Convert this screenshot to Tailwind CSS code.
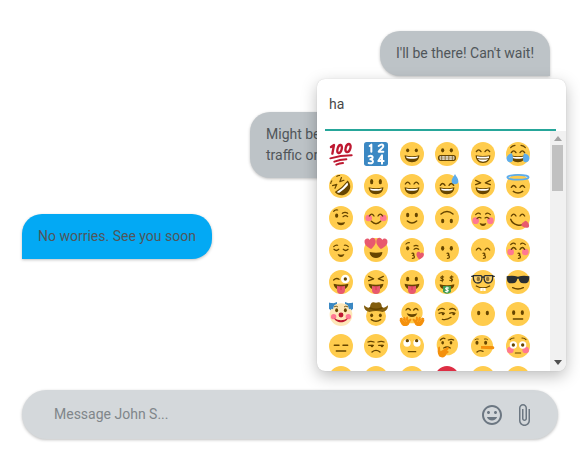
<!DOCTYPE html>
<html lang="en">
<head>
<meta charset="utf-8">
<meta name="viewport" content="width=device-width, initial-scale=1">
<title>Chat</title>
<script src="https://cdn.jsdelivr.net/npm/@tailwindcss/browser@4"></script>
</head>
<body class="flex min-h-screen flex-col overflow-hidden bg-white px-[22px] pt-[31px] pb-[21px] font-[Roboto,sans-serif] text-sm leading-[21px] text-[#50565a]">
<main class="flex flex-1 flex-col gap-9 pr-2">
  <p class="self-end rounded-[20px] rounded-br-none bg-[#bdc3c7] px-4 py-3 shadow-[0_1px_3px_rgba(0,0,0,0.25)]">I'll be there! Can't wait!</p>
  <p class="w-[300px] self-end rounded-[20px] rounded-br-none bg-[#bdc3c7] px-4 py-3 shadow-[0_1px_3px_rgba(0,0,0,0.25)]">Might be a few minutes late, there is<br>traffic on the way</p>
  <p class="self-start rounded-[20px] rounded-bl-none bg-[#03a9f4] px-4 py-3 shadow-[0_1px_3px_rgba(0,0,0,0.25)]">No worries. See you soon</p>
</main>

<footer class="relative">
  <section aria-label="Emoji picker" class="absolute -right-2 bottom-full mb-[19px] flex h-[292px] w-[249px] flex-col overflow-hidden rounded-lg bg-white shadow-[0_5px_16px_rgba(0,0,0,0.26),0_0_1px_rgba(0,0,0,0.2)]">
    <input type="text" aria-label="Search emoji" value="ha" class="mr-2.5 ml-2 h-[52px] shrink-0 border-b-2 border-[#26a69a] bg-transparent pl-1 text-[#484848] outline-none">
    <div class="flex min-h-0 flex-1">
      <div id="emoji" class="grid flex-1 auto-rows-[32px] grid-cols-6 content-start overflow-hidden pt-[7px] pr-3.5 pl-1.5"></div>
      <div aria-hidden="true" class="flex w-4 flex-col items-center justify-between bg-[#f1f1f1] pr-px">
        <div class="flex flex-col items-center gap-1 pt-[5px]">
          <svg class="h-[5px] w-2" viewBox="0 0 8 5"><path d="M4 0l4 5H0z" fill="#a3a3a3"/></svg>
          <div class="h-[46px] w-[11px] bg-[#c1c1c1]"></div>
        </div>
        <svg class="mb-1.5 h-[5px] w-2" viewBox="0 0 8 5"><path d="M4 5l4-5H0z" fill="#505050"/></svg>
      </div>
    </div>
  </section>

  <form class="flex h-[49px] items-center gap-2 rounded-full bg-[#d4d8db] pr-[22px] pl-8 shadow-[0_1px_3px_rgba(0,0,0,0.25)]">
    <input type="text" aria-label="Message" placeholder="Message John S..." class="min-w-0 flex-1 bg-transparent outline-none placeholder:text-[#80868a]">
    <button type="button" aria-label="Emoji" class="text-[#6c7782]"><svg class="size-6" viewBox="0 0 24 24" fill="currentColor"><path d="M11.99 2C6.47 2 2 6.48 2 12s4.47 10 9.99 10C17.52 22 22 17.52 22 12S17.52 2 11.99 2zM12 20c-4.42 0-8-3.58-8-8s3.58-8 8-8 8 3.58 8 8-3.58 8-8 8zm3.5-9c.83 0 1.5-.67 1.5-1.5S16.33 8 15.5 8 14 8.67 14 9.5s.67 1.5 1.5 1.5zm-7 0c.83 0 1.5-.67 1.5-1.5S9.33 8 8.5 8 7 8.67 7 9.5 7.67 11 8.5 11zm3.5 6.5c2.33 0 4.31-1.46 5.11-3.5H6.89c.8 2.04 2.78 3.5 5.11 3.5z"/></svg></button>
    <button type="button" aria-label="Attach file" class="text-[#6c7782]"><svg class="size-6" viewBox="0 0 24 24" fill="currentColor"><path d="M16.5 6v11.5c0 2.21-1.79 4-4 4s-4-1.79-4-4V5c0-1.38 1.12-2.5 2.5-2.5s2.5 1.12 2.5 2.5v10.5c0 .55-.45 1-1 1s-1-.45-1-1V6H10v9.5c0 1.38 1.12 2.5 2.5 2.5s2.5-1.12 2.5-2.5V5c0-2.21-1.79-4-4-4S7 2.79 7 5v12.5c0 3.04 2.46 5.5 5.5 5.5s5.5-2.46 5.5-5.5V6h-1.5z"/></svg></button>
  </form>
</footer>

<script>
// Emoji artwork on a 36-unit canvas, assembled from shared facial features.
const B = '#664500';
const fill = (d, c = B) => `<path fill="${c}" d="${d}"/>`;
const line = (d, w = 2, c = B) => `<path fill="none" stroke="${c}" stroke-width="${w}" stroke-linecap="round" stroke-linejoin="round" d="${d}"/>`;
const oval = (x, y, rx, ry, c = B) => `<ellipse cx="${x}" cy="${y}" rx="${rx}" ry="${ry}" fill="${c}"/>`;
const face = oval(18, 18, 18, 18, '#ffcc4d');
const eyes = (y, ry = 3.2, rx = 2.4) => oval(11.5, y, rx, ry) + oval(24.5, y, rx, ry);
const happy = y => line(`M8 ${y}q3.5-5.5 7 0M21 ${y}q3.5-5.5 7 0`);
const shut = y => line(`M7.5 ${y}q3.5 3.5 7 0M21.5 ${y}q3.5 3.5 7 0`);
const squint = line('M7 9.5l7.5 3.7-7.5 2.8M29 9.5l-7.5 3.7 7.5 2.8');
const grin = fill('M7 20q11 3 22 0c0 6-4 10.5-11 10.5S7 26 7 20z') + fill('M9 21.7q9 1.8 18 0-.2 3-3.5 3.2-5.5.7-11 0Q9.2 24.700 9 21.7z', '#fff');
const beam = fill('M7 20q11 2 22 0c0 7-4 11.5-11 11.5S7 27 7 20z') + fill('M9 21.5q9 1.5 18 0V24q-9 1.5-18 0zM10 25.5q8 1.5 16 0-2.5 4-8 4t-8-4z', '#fff');
const brows = line('M7 8.5q2-3 6.5-3.5M29 8.5q-2-3-6.5-3.5', 1.8);
const cheeks = y => oval(7, y, 5, 5, '#ff7892') + oval(29, y, 5, 5, '#ff7892');
const smile = (y, h = 5) => line(`M11 ${y}q7 ${h} 14 0`, 2.2);
const kiss = line('M18 23c3-.8 4 2.500 1 3.200 3.800.3 3.800 4.500-.5 4.300', 1.8);
const tongue = fill('M7 20.5q11 3 22 0c0 5-4 9-11 9s-11-4-11-9z') + fill('M12 23.5q6 2 12 0V30a6 6 0 0 1-12 0z', '#e8596e') + line('M18 24.5v5', 1.2, '#dd2e44');
const heart = (x, y, s) => `<path transform="translate(${x} ${y}) scale(${s})" fill="#e8596e" d="M0 3C-1-1-8-1-8 5c0 5 4 8 8 11 4-3 8-6 8-11 0-6-7-6-8-2z"/>`;
const hand = fill('M1 24q1-1.500 2.500 0l2 2-.500-3q1-2 2.500 0l1.500 3 .5-3.500q2-1.500 2.500.5l.500 4 3-2q2 0 1.500 2l-2.500 4c-1 4-4 5-7 5-5 0-6-4-8-8q-.500-2 1-2l-1-2z', '#f4900c') + line('M3.500 26l4 3.500M8.500 26.500l1.500 3', 1, '#ffac33');

const emoji = [
  ['hundred points', line('M3 7.5L7.5 4.500 5 17.500M17.500 4.5c-4-.5-7 10.500-3.500 12C18.5 17.500 21.5 5.5 17.5 4.5zM30 3c-5 0-7 11-3.5 12C31.5 16 35 3.5 30 3z', 3.5, '#be1931') + line('M2 24.5Q17 20 34 20M8 29.5q8-3 18-3.5M11 34q5-2 10-2.5', 3, '#be1931')],
  ['numbers', '<rect width="36" height="36" rx="4" fill="#3b88c3"/>' + line('M8.5 6l2.500-2v10.5M22 6q6-4.5 7 0c0 3-5 5-7 8.500h7M7 21.5c7-3 8 4 2.5 4.5C16 26.5 14 34 7 31.5M27 32.5V20l-5.5 8.5h8', 3, '#fff')],
  ['grinning', face + eyes(12.5, 2.8, 2.3) + grin],
  ['grimacing', face + eyes(12.5) + `<rect x="5.500" y="20.500" width="25" height="7" rx="3" fill="#fff" stroke="${B}" stroke-width="2"/>` + line('M5 24h26M10 20v8M15.3 20v8M20.7 20v8M26 20v8', 1)],
  ['beaming', face + happy(14.5) + beam],
  ['tears of joy', face + brows + happy(16) + grin + fill('M9 17C3 18 0 22 1 26c1 5 7 6 9 2 1-3 0-7-1-11zM27 17c6 1 9 5 8 9-1 5-7 6-9 2-1-3 0-7 1-11z', '#5dadec')],
  ['rolling on the floor', `<g transform="rotate(-42 18 18)">${face}${line('M9 9l6 3-6 2.500M27 9l-6 3 6 2.500', 1.800)}${line('M9 5q2-2 4-2M27 5q-2-2-4-2', 1.600)}${fill('M5 18.500q13 2.500 26 0c0 8-5 13.500-13 13.500S5 26.500 5 18.500z')}${fill('M7.500 20.500q10.500 2 21 0 0 3-2.500 3.500-8 1-16 0-2.500-.5-2.500-3.500z', '#fff')}</g>`],
  ['smiley', face + eyes(11.5, 4) + grin],
  ['smile', face + happy(15) + grin],
  ['sweat smile', face + happy(17) + grin + fill('M30 0c-2 4-5 7-5 10.5a5 5 0 0 0 10 0C35 7 32 4 30 0z', '#5dadec')],
  ['laughing', face + squint + grin],
  ['innocent', face + '<ellipse cx="18" cy="5" rx="16" ry="3.6" fill="none" stroke="#5dadec" stroke-width="2.6"/>' + happy(20) + smile(26, 5)],
  ['wink', face + oval(11.5, 14.5, 2.4, 3.2) + line('M7 8q2-3 6-2M20 11q4-3 8 0M21 16q4-3 7 0', 1.800) + fill('M12 24q6 2.500 12 0-1 5-6 5t-6-5z')],
  ['blush', face + cheeks(18) + happy(15) + smile(23, 7)],
  ['slight smile', face + eyes(13.5, 3.5) + smile(22.5, 6)],
  ['upside down', face + eyes(22.5, 3.5) + line('M9 12q9-7.500 18 0', 2.2)],
  ['relaxed', face + cheeks(22) + line('M7 13q4-4 7-1M29 13q-4-4-7-1', 1.8) + line('M9 19q3-3 6-1M27 19q-3-3-6-1', 1.8) + fill('M13 25.500q5 2 10 0-1 4.500-5 4.500t-5-4.500z')],
  ['yum', face + happy(15) + line('M7 20c3 9 16 12 23 5', 2.2) + fill('M24 26l5-4c4 1 7 6 5 10-4 2-9 0-11-3z', '#e8596e')],
  ['relieved', face + line('M7 13q3-3 6-2M29 13q-3-3-6-2', 1.7) + shut(17) + fill('M13 24q5 2 10 0-1 4.500-5 4.500t-5-4.500z')],
  ['heart eyes', face + `<g transform="rotate(-8 9 8)">${heart(9.5, 0, 1.05)}</g><g transform="rotate(8 27 8)">${heart(26.5, 0, 1.05)}</g>` + fill('M8.5 21q9.500 2 19 0c0 5.500-4.500 9-9.500 9s-9.500-3.500-9.500-9z')],
  ['kissing heart', face + oval(11.5, 15.5, 2.4, 3.2) + line('M9 9q2-2.500 5-2M21 12q3-2 6 0M21 17q3-3 7 0', 1.800) + kiss + `<g transform="rotate(12 30 26)">${heart(30, 21, .7)}</g>`],
  ['kissing', face + eyes(15.5, 3.5) + kiss],
  ['kissing smiling', face + happy(18) + kiss],
  ['kissing closed eyes', face + cheeks(21) + line('M7 10q4-4 7-1M29 10q-4-4-7-1', 1.8) + happy(17) + kiss],
  ['wink tongue', face + oval(24.5, 13.5, 6.5, 6.5, '#fff') + oval(24.5, 13.5, 2.5, 2.5) + line('M7 15q4-4 8-1') + tongue],
  ['squint tongue', face + squint + tongue],
  ['tongue', face + eyes(13.5, 3.5) + tongue],
  ['money', face + line('M13 10.500c-4-2-6 1.500-2.500 2.500s2 4-2.500 2.500M11 8.500v9M27 10.500c-4-2-6 1.500-2.500 2.500s2 4-2.500 2.500M25 8.500v9', 1.6) + fill('M7 21.500q11 3 22 0c0 5-4 8-11 8s-11-3-11-8z') + fill('M12 24h12v9q-6 5-12 0z', '#3e9b52') + line('M20.5 27c-5-1.5-6 1.500-2.5 2.500s2 3.500-2.5 2.500M18 25.5v8', 1.6, '#fff')],
  ['nerd', face + oval(11, 13.5, 2.600, 3.300) + oval(25, 13.5, 2.600, 3.300) + '<path fill="#ffe8b6" fill-opacity=".3" stroke="#292f33" stroke-width="1.9" d="M3.500 8.500h11q2 0 2 2.500c0 6-2 8.500-6 8.500s-7.500-2-7-11zM32.500 8.500h-11q-2 0-2 2.500c0 6 2 8.500 6 8.500s7.500-2 7-11z"/>' + line('M1 9.500h2M33 9.500h2M16.500 11q1.500-1 3 0', 1.900, '#292f33') + line('M8 24q10 6 20 0') + fill('M14 27h8v4.500h-3.5v-3.500h-1v3.500H14z', '#fff')],
  ['sunglasses', face + fill('M1 9.500q9-2 17 .5 8-2.500 17-.5v2.500c-1 7.500-3 8-9 8-4 0-6-2.500-7-7h-2c-1 4.500-3 7-7 7-6 0-8-.5-9-8z', '#292f33') + line('M10 26.500q8 4 16 0', 2.2)],
  ['clown', fill('M0 1l7 1 5-2v9L4 14l-4-4zM36 1l-7 1-5-2v9l8 5 4-4z', '#3b88c3') + oval(18, 19, 17, 17, '#fee7b8') + fill('M0 1l8 2-2 8-6-2zM36 1l-8 2 2 8 6-2z', '#3b88c3') + oval(7, 22, 4, 4, '#ff7892') + oval(29, 22, 4, 4, '#ff7892') + eyes(12.5, 3, 2.200) + line('M8 7q3-2 5 0M28 7q-3-2-5 0', 1.3) + fill('M8 24.500q10 6 20 0c-.5 3.500-5 6-10 6s-9.500-2.500-10-6z', '#be1931') + oval(18, 19.500, 3.700, 3.700, '#be1931')],
  ['cowboy', oval(18, 21, 15, 15, '#ffcc4d') + eyes(20, 2.8, 2.200) + smile(26.5, 5) + fill('M0 5c4 4 7 4 9 3 1-9 5-8 9-7 4-1 8-2 9 7 2 1 5 1 9-3 0 6-3 9-8 10q-10-3-20 0C3 14 0 11 0 5z', '#825d0e') + line('M9 9q9 4 18 0', 2.5, B)],
  ['hugging', oval(18, 16, 16, 16, '#ffcc4d') + line('M9 12q3-4.500 6.500 0M20.500 12q3.500-4.500 6.500 0') + fill('M10 17q8 3 16 0-2 5.500-8 5.500T10 17z') + hand + `<g transform="matrix(-1 0 0 1 36 0)">${hand}</g>`],
  ['smirk', face + line('M5 12q5-4 9-1M22 11q5-3 9 1M6 17q4-2 8 0M22 17q4-2 8 0M11 26q7 1.5 13-3', 1.900) + oval(12, 18, 2, 2) + oval(28, 18, 2, 2)],
  ['no mouth', face + eyes(16.5, 3.5)],
  ['neutral', face + eyes(16, 3.5) + line('M11 25.5h14')],
  ['expressionless', face + line('M8 17h7M21 17h7M11 25.5h14', 2.2)],
  ['unamused', face + line('M6 12q4-2 9 0M21 12q5-2 9 0M7 17h7M22 17h7M12 27q6-5 12 0') + oval(12, 18, 2, 1.8) + oval(27, 18, 2, 1.8)],
  ['rolling eyes', face + oval(10.5, 13.5, 5.500, 5.500, '#fff') + oval(25.5, 13.5, 5.500, 5.500, '#fff') + oval(11, 10, 2.5, 2.5) + oval(25, 10, 2.5, 2.5) + line('M12.5 26.5h11')],
  ['thinking', oval(18.5, 16, 16, 16, '#ffcc4d') + line('M8 9q4-4 7-2M20 9q5-2 8 0', 1.900) + oval(11.500, 13, 2, 2.6) + oval(24, 13, 2, 2.6) + line('M13 21q5-3 10 0', 1.900) + fill('M5 20c-1.500 4-1.500 9 1 13 4 4 10 2 11-3l3-2c1-2 0-3-2-3l2.500-2.500c1-2.500-1-3.500-2.500-2.500l-8 5-2 1-.500-6q-1-2.500-2.500 0z', '#f4900c')],
  ['lying', oval(16.5, 18, 16.5, 16.5, '#ffcc4d') + oval(9, 13, 2.3, 3) + oval(22, 13, 2.3, 3) + line('M9 27q4-3.500 9-1') + fill('M15 18h17q3 0 3 2.500T32 23l-17-1z', '#f4900c') + line('M6 8.500q3-2 5-1M20 7.500q3-1 5 1', 1.3)],
  ['flushed', face + oval(6.5, 24, 5, 5, '#ff7892') + oval(29.5, 24, 5, 5, '#ff7892') + oval(11, 16.5, 5.5, 5.5, '#fff') + oval(25, 16.5, 5.5, 5.5, '#fff') + oval(11, 16.5, 2.5, 2.5) + oval(25, 16.5, 2.5, 2.5) + line('M6 8.500q2-2.500 6-2.500M30 8.500q-2-2.500-6-2.500M14 28.5h8', 1.7)],
  ['disappointed', face + shut(16) + line('M12 27q6-6 12 0')],
  ['worried', face + eyes(16) + line('M12 27q6-6 12 0')],
  ['angry', face + eyes(17) + line('M12 27q6-6 12 0')],
  ['rage', oval(18, 18, 18, 18, '#dd2e44') + eyes(17) + line('M12 27q6-6 12 0')],
  ['pensive', face + shut(16) + line('M12 26h12')],
  ['confused', face + eyes(16) + line('M12 27q6-4 12-2')],
];
document.getElementById('emoji').innerHTML = emoji.map(([name, art]) =>
  `<button type="button" aria-label="${name}" class="grid place-items-center"><svg class="size-6 overflow-visible" viewBox="0 0 36 36">${art}</svg></button>`).join('');
</script>
</body>
</html>
